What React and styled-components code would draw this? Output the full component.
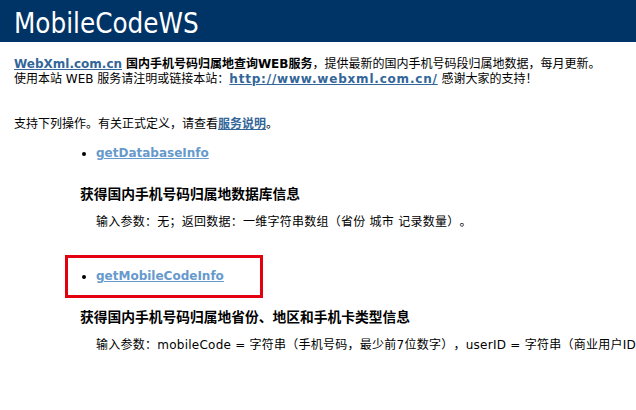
import React from "react";
import styled, { createGlobalStyle } from "styled-components";

const GlobalStyle = createGlobalStyle`
  html, body {
    margin: 0;
    padding: 0;
    background: #fff;
  }
  body {
    font-family: "DejaVu Sans", "Noto Sans CJK SC", sans-serif;
    color: #000;
    overflow: hidden;
    text-spacing-trim: space-all;
  }
`;

const Header = styled.h1`
  margin: 0;
  height: 42px;
  padding-left: 14px;
  background: #003366;
  color: #fff;
  font-family: "DejaVu Sans Condensed", "DejaVu Sans", sans-serif;
  font-weight: normal;
  font-size: 27.5px;
  line-height: 46px;
  box-sizing: border-box;
  overflow: hidden;
`;

const Content = styled.div`
  padding-left: 14px;
  font-size: 12px;
  line-height: 15px;
`;

const Intro = styled.p`
  margin: 15px 0 0;
  white-space: nowrap;
`;

const Para = styled.p`
  margin: 30px 0 0;
`;

const Link = styled.a`
  color: ${(p) => (p.$visited ? "#6699cc" : "#336699")};
  font-weight: bold;
  text-decoration: underline;
  letter-spacing: ${(p) => (p.$wide ? "0.8px" : "normal")};
  cursor: pointer;
`;

const Strong = styled.b`
  font-weight: bold;
`;

const Operation = styled.div`
  margin-left: 51px;
  margin-top: ${(p) => p.$gap}px;
`;

const OpRow = styled.div`
  display: flex;
  align-items: center;
  gap: 10px;
  width: 198px;
  height: 43px;
  box-sizing: border-box;
  padding-left: 14px;
  border: 3px solid ${(p) => (p.$marked ? "#e3000f" : "transparent")};
`;

const Dot = styled.span`
  width: 4px;
  height: 4px;
  border-radius: 50%;
  background: #000;
  flex: none;
`;

const OpTitle = styled.h3`
  margin: 10px 0 0 15px;
  font-size: 13.75px;
  line-height: 18px;
  font-weight: bold;
`;

const OpDesc = styled.p`
  margin: 12px 0 0 31px;
  white-space: nowrap;
  letter-spacing: 0.25px;
`;

const operations = [
  {
    name: "getDatabaseInfo",
    title: "获得国内手机号码归属地数据库信息",
    desc: "输入参数：无；返回数据：一维字符串数组（省份 城市 记录数量）。",
    gap: 0,
  },
  {
    name: "getMobileCodeInfo",
    title: "获得国内手机号码归属地省份、地区和手机卡类型信息",
    desc: "输入参数：mobileCode = 字符串（手机号码，最少前7位数字），userID = 字符串（商业用户ID） 免费用户为空字符串；返回数据：字符串（手机号码：省份 城市 手机卡类型）。",
    gap: 25,
    marked: true,
  },
];

export default function App() {
  return (
    <>
      <GlobalStyle />
      <Header>MobileCodeWS</Header>
      <Content>
        <Intro>
          <Link>WebXml.com.cn</Link> <Strong>国内手机号码归属地查询WEB服务</Strong>，提供最新的国内手机号码段归属地数据，每月更新。
          <br />
          使用本站 WEB 服务请注明或链接本站：<Link $wide>http://www.webxml.com.cn/</Link> 感谢大家的支持！
        </Intro>
        <Para>
          支持下列操作。有关正式定义，请查看<Link>服务说明</Link>。
        </Para>
        {operations.map((op) => (
          <Operation key={op.name} $gap={op.gap}>
            <OpRow $marked={op.marked}>
              <Dot />
              <Link $visited>{op.name}</Link>
            </OpRow>
            <OpTitle>{op.title}</OpTitle>
            <OpDesc>{op.desc}</OpDesc>
          </Operation>
        ))}
      </Content>
    </>
  );
}
